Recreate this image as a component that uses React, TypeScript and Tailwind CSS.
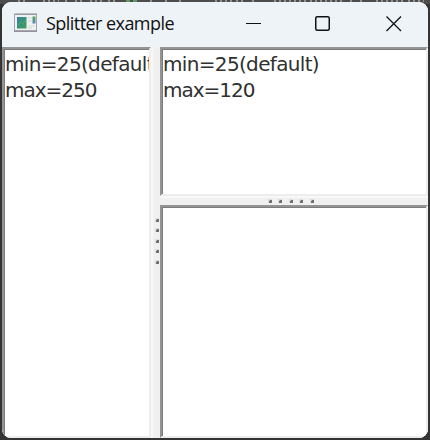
import type { ReactNode } from 'react';

function Pane({ children, className = '' }: { children?: ReactNode; className?: string }) {
  return (
    <div
      className={`overflow-hidden border-t-2 border-r-2 border-b-2 border-l-2 border-t-[#949494] border-l-[#949494] border-r-[#ededed] border-b-[#ededed] bg-white ${className}`}
    >
      <div className="h-full w-full border-t border-l border-[#7c7c7c]">{children}</div>
    </div>
  );
}

function Label({ lines }: { lines: string[] }) {
  return (
    <div className="whitespace-nowrap pt-px font-['DejaVu_Sans',sans-serif] text-[20px] leading-[26px] text-[#303030]">
      <div className="tracking-[-0.66px]">{lines[0]}</div>
      <div className="tracking-[-1px]">{lines[1]}</div>
    </div>
  );
}

function Grip({ vertical = false }: { vertical?: boolean }) {
  return (
    <div className={vertical ? 'flex flex-col gap-[6.5px]' : 'flex gap-[6.5px]'}>
      {[0, 1, 2, 3, 4].map((i) => (
        <span key={i} className="relative block size-[4px] bg-[#dedede]">
          <span className="absolute right-0 bottom-0 block size-[3px] border-r-2 border-b-2 border-[#707070] bg-[#bcbcbc]" />
        </span>
      ))}
    </div>
  );
}

function AppIcon() {
  return (
    <svg width="24" height="20" viewBox="0 0 24 20">
      <defs>
        <linearGradient id="picture" x1="0" y1="0" x2="1" y2="1">
          <stop offset="0" stopColor="#3e7caa" />
          <stop offset="0.5" stopColor="#36947c" />
          <stop offset="1" stopColor="#489c55" />
        </linearGradient>
        <linearGradient id="side" x1="0" y1="0" x2="0" y2="1">
          <stop offset="0" stopColor="#54a36b" />
          <stop offset="1" stopColor="#5289b2" />
        </linearGradient>
      </defs>
      <rect x="2.5" y="1" width="20" height="17" fill="#f1f2f4" stroke="#b4b6bb" />
      <rect x="0.5" y="1" width="22" height="17.5" fill="#eff1f3" stroke="#a2a5ab" />
      <path d="M0 1.5h23" stroke="#9a9da4" />
      <path d="M0 18h23" stroke="#8c8d98" strokeWidth="1.5" />
      <rect x="3" y="4" width="9.5" height="11.5" fill="url(#picture)" />
      <path d="M4 12l3-3 2 2 3-4" stroke="#54a36b" fill="none" />
      <rect x="18.5" y="3.5" width="3" height="7" fill="url(#side)" />
      <path d="M14 5h4M14 8h4M14 13h7M14 15h4" stroke="#d4d7d8" />
    </svg>
  );
}

export default function App() {
  return (
    <div className="relative h-[440px] w-[430px] overflow-hidden bg-[#353435] p-[2px]">
      <svg className="absolute top-0 left-0" width="430" height="4">
        <rect width="430" height="4" fill="#4d4d4d" />
        <path
          d="M18 1h7M43 1h16M65 1h5M75 1h10M90 1h13M108 1h9M150 1h3M165 1h2M179 1h3M215 1h17M236 1h7M252 1h2M274 1h32M310 1h35M350 1h5M360 1h5M376 1h28M408 1h16"
          stroke="#929292"
          strokeWidth="2"
          strokeDasharray="2 3"
        />
        <path d="M126 1h13" stroke="#5d9960" strokeWidth="2" strokeDasharray="4 3" />
      </svg>
      <div className="relative flex h-[436px] w-[426px] flex-col overflow-hidden rounded-[9px] bg-[#f0f0f0]">
        <header className="flex h-[45px] shrink-0 items-center bg-[#eef3f8] pb-[3px] pl-3">
          <AppIcon />
          <h1 className="ml-2 w-[180px] whitespace-nowrap font-['Open_Sans',sans-serif] text-[18px] leading-6 font-normal tracking-[-0.55px] text-[#111111]">
            Splitter example
          </h1>
          <svg className="ml-[18px]" width="158" height="18" viewBox="0 0 158 18" fill="none" stroke="#101214">
            <path d="M2 9.5h15" />
            <rect x="71.75" y="2.75" width="13.5" height="13.5" rx="1.5" strokeWidth="1.5" />
            <path d="M142.5 2.5l14.5 14.5M157 2.5l-14.5 14.5" strokeWidth="1.3" />
          </svg>
        </header>
        <main className="flex min-h-0 flex-1">
          <Pane className="w-[149px] shrink-0">
            <Label lines={['min=25(default)', 'max=250']} />
          </Pane>
          <div className="flex w-[9px] shrink-0 items-center justify-center border-l-2 border-[#f8f8f8] pb-[4px]">
            <Grip vertical />
          </div>
          <div className="flex min-w-0 flex-1 flex-col">
            <Pane className="h-[149px] shrink-0">
              <Label lines={['min=25(default)', 'max=120']} />
            </Pane>
            <div className="flex h-[9px] shrink-0 items-center justify-center border-t-2 border-[#f8f8f8] pr-[7px] pb-px">
              <Grip />
            </div>
            <Pane className="flex-1" />
          </div>
        </main>
      </div>
    </div>
  );
}
